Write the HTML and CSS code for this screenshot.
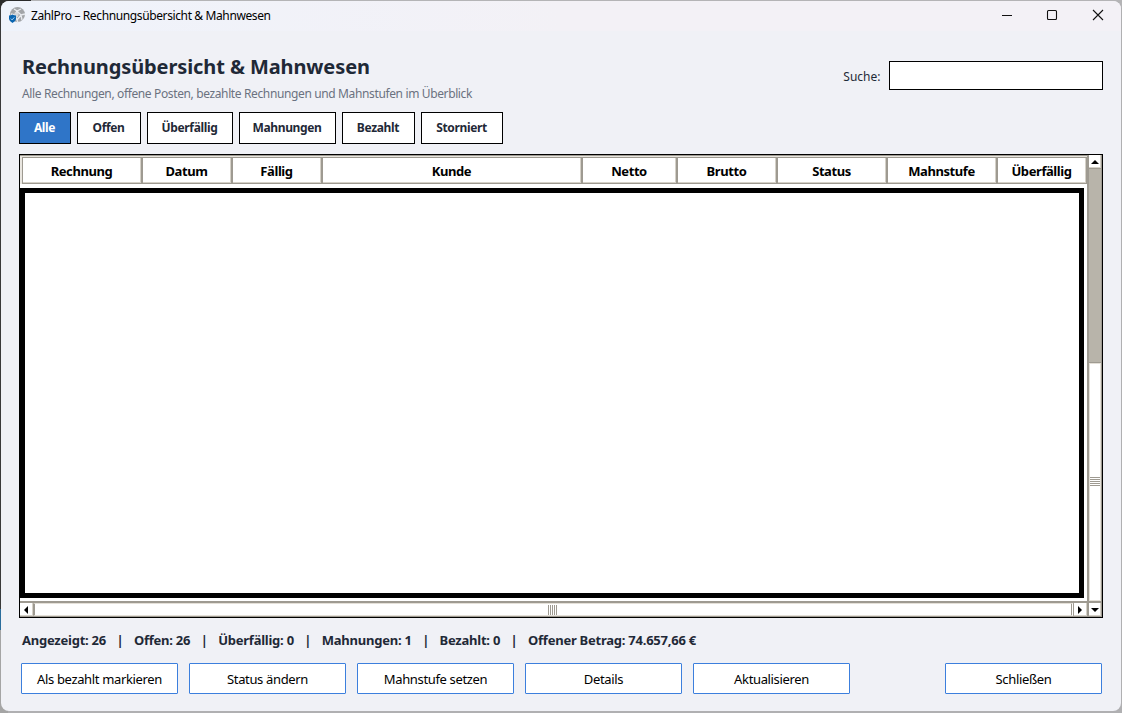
FILE: index.html
```
<!DOCTYPE html>
<html lang="de">
<head>
    <meta charset="UTF-8">
    <title>ZahlPro – Rechnungsübersicht &amp; Mahnwesen</title>
    <link rel="stylesheet" href="styles.css">
</head>
<body>
    <div class="window">
        <!-- Title Bar -->
        <header class="titlebar">
            <svg class="app-icon" width="18" height="18" viewBox="0 0 18 18">
                <circle cx="9.5" cy="7.500" r="7.500" fill="#a3a5a8"/>
                <path d="M6 2l3 2 4-2M3 7l4 1 2-4 4 4 4-1M7 8l2 5 4-5M9 13l1 3M13 8l1 5" fill="none" stroke="#e9ebef" stroke-width="1.3"/>
                <path d="M7 5l4 1-1 4-3 1-1-3z" fill="#d4d6d9"/>
                <path d="M1 8.500Q3 8.500 4.500 7.500Q6 8.500 8 8.500V12Q7.500 14.800 4.500 16Q1.500 14.800 1 12z" fill="#0b66b1"/>
                <path d="M2.800 11.600l1.300 1.300 2.200-2.500" fill="none" stroke="#b9dcfa" stroke-width="0.9"/>
            </svg>
            <span class="window-title">ZahlPro – Rechnungsübersicht &amp; Mahnwesen</span>
            <div class="window-controls">
                <svg width="12" height="12" viewBox="0 0 12 12"><path d="M2 6.500h10"/></svg>
                <svg width="12" height="12" viewBox="0 0 12 12"><rect x="1.500" y="1.500" width="9" height="9" rx="1"/></svg>
                <svg width="12" height="12" viewBox="0 0 12 12"><path d="M1 1l10 10M11 1L1 11"/></svg>
            </div>
        </header>

        <main class="content">
            <div class="page-header">
                <div>
                    <h1>Rechnungsübersicht &amp; Mahnwesen</h1>
                    <p class="subtitle">Alle Rechnungen, offene Posten, bezahlte Rechnungen und Mahnstufen im Überblick</p>
                </div>
                <div class="search">
                    <label for="suche">Suche:</label>
                    <input type="text" id="suche">
                </div>
            </div>

            <!-- Filter Buttons -->
            <div class="filters">
                <button class="filter alle active">Alle</button>
                <button class="filter offen">Offen</button>
                <button class="filter ueberfaellig">Überfällig</button>
                <button class="filter mahnungen">Mahnungen</button>
                <button class="filter bezahlt">Bezahlt</button>
                <button class="filter storniert">Storniert</button>
            </div>

            <!-- Invoice Table -->
            <div class="table-frame">
                <div class="table-view">
                    <div class="table-head">
                        <div class="col">Rechnung</div>
                        <div class="col">Datum</div>
                        <div class="col">Fällig</div>
                        <div class="col">Kunde</div>
                        <div class="col">Netto</div>
                        <div class="col">Brutto</div>
                        <div class="col">Status</div>
                        <div class="col">Mahnstufe</div>
                        <div class="col">Überfällig</div>
                    </div>
                    <div class="table-body"></div>
                </div>
                <div class="scroll-v">
                    <div class="arrow"><svg width="8" height="4" viewBox="0 0 8 4"><path d="M0 4L4 0L8 4z"/></svg></div>
                    <div class="trough"></div>
                    <div class="thumb"><div class="grip"></div></div>
                </div>
                <div class="scroll-h">
                    <div class="arrow"><svg width="4" height="8" viewBox="0 0 4 8"><path d="M4 0L0 4L4 8z"/></svg></div>
                    <div class="thumb"><div class="grip"></div></div>
                    <div class="arrow"><svg width="4" height="8" viewBox="0 0 4 8"><path d="M0 0L4 4L0 8z"/></svg></div>
                </div>
                <div class="arrow corner"><svg width="8" height="4" viewBox="0 0 8 4"><path d="M0 0L4 4L8 0z"/></svg></div>
            </div>

            <!-- Summary -->
            <div class="summary">
                <span>Angezeigt: 26</span>
                <span>|</span>
                <span>Offen: 26</span>
                <span>|</span>
                <span>Überfällig: 0</span>
                <span>|</span>
                <span>Mahnungen: 1</span>
                <span>|</span>
                <span>Bezahlt: 0</span>
                <span>|</span>
                <span>Offener Betrag: 74.657,66 €</span>
            </div>

            <div class="actions">
                <button class="action">Als bezahlt markieren</button>
                <button class="action">Status ändern</button>
                <button class="action">Mahnstufe setzen</button>
                <button class="action">Details</button>
                <button class="action">Aktualisieren</button>
                <button class="action close">Schließen</button>
            </div>
        </main>
    </div>
</body>
</html>
```
FILE: styles.css
```
/* General Styles */
* {
    box-sizing: border-box;
}

body {
    margin: 0;
    padding: 1px;
    height: 713px;
    overflow: hidden;
    font-family: "Noto Sans", "Open Sans", sans-serif;
    background:
        linear-gradient(to right, #2b2b2b 31px, #b4b4b6 31px) top / 100% 8px no-repeat,
        linear-gradient(#3a3a3a 609px, #2a6d9c 609px, #2a6d9c 630px, #a5a5a5 630px) left / 8px 100% no-repeat,
        #b0b0b2;
}

.window {
    width: 1120px;
    height: 710px;
    background: #f0f1f6;
    border-radius: 8px;
    overflow: hidden;
}

/* Title Bar */
.titlebar {
    display: flex;
    align-items: center;
    height: 30px;
    padding: 0 17px 0 7px;
    background: linear-gradient(to right, #eff3fb, #f3f1f6 50%);
}

.window-title {
    margin-left: 5px;
    padding-bottom: 1px;
    font-size: 12px;
    letter-spacing: -0.38px;
    color: #000;
    white-space: nowrap;
}

.window-controls {
    display: flex;
    gap: 34px;
    margin-left: auto;
    padding-bottom: 2px;
}

.window-controls svg {
    fill: none;
    stroke: #111;
    stroke-width: 1.1;
}

.content {
    padding: 22px 18px 0;
}

/* Page Header */
.page-header {
    display: flex;
    justify-content: space-between;
    height: 58px;
}

.page-header h1 {
    margin: 0 0 0 3px;
    font-size: 20px;
    line-height: 27px;
    color: #1f2937;
    letter-spacing: -0.1px;
}

.subtitle {
    margin: 5px 0 0 3px;
    font-size: 12px;
    line-height: 18px;
    color: #6b7280;
    letter-spacing: -0.37px;
}

.search {
    display: flex;
    align-items: center;
    height: 29px;
    margin-top: 8px;
    gap: 8.5px;
    font-size: 12px;
    color: #1f2937;
}

.search label {
    padding-top: 2px;
}

.search input {
    width: 214px;
    height: 29px;
    border: 1px solid #000;
    background: #fff;
}

/* Filters */
.filters {
    display: flex;
    gap: 6px;
    margin-top: 1px;
}

.filter {
    height: 32px;
    padding: 0 1px 1px 0;
    border: 1px solid #000;
    background: #fff;
    color: #1f2937;
    font: bold 12px "Noto Sans", sans-serif;
    letter-spacing: -0.35px;
}

.alle { width: 52px; }
.offen { width: 64px; }
.ueberfaellig { width: 86px; }
.mahnungen { width: 97px; }
.bezahlt { width: 73px; }
.storniert { width: 82px; }

.filter.active {
    background: #2f75c8;
    color: #fff;
}

/* Table */
.table-frame {
    display: grid;
    grid-template-columns: 1067px 15px;
    grid-template-rows: 446px 16px;
    width: 1084px;
    height: 464px;
    margin-top: 10px;
    border: 1px solid #000;
    background: #fff;
}

.table-view {
    display: flex;
    flex-direction: column;
    border-top: 1px solid #9e9a91;
}

.table-head {
    display: grid;
    grid-template-columns: 120px 90px 90px 260px 95px 100px 110px 110px 90px;
    height: 28px;
    padding-left: 2px;
    background: #e9e6e0;
}

.col {
    display: flex;
    align-items: center;
    justify-content: center;
    margin-top: 1px;
    padding-right: 1px;
    border: 1px solid #9e9a91;
    box-shadow: inset -1px -1px #d5d1c8;
    background: #fff;
    color: #000;
    font-size: 13px;
    font-weight: bold;
    letter-spacing: -0.42px;
}

.table-body {
    width: 1064px;
    height: 410px;
    margin-top: 4px;
    border: 5px solid #000;
    background: #fff;
}

/* Scrollbars */
.scroll-v {
    display: flex;
    flex-direction: column;
    border-left: 2px solid #9e9a91;
    border-right: 1px solid #9e9a91;
}

.arrow {
    display: flex;
    align-items: center;
    justify-content: center;
    width: 12px;
    height: 13px;
    padding-right: 1px;
    background: #fff;
    box-shadow: inset -1px -1px #d5d1c8;
}

.trough {
    height: 195px;
    border-top: 1px solid #9e9a91;
    border-bottom: 1px solid #9e9a91;
    background: #b8b4aa;
}

.thumb {
    display: flex;
    align-items: center;
    justify-content: center;
    flex: 1;
    border: 1px solid #e4e0d8;
    background: #fff;
}

.scroll-v .grip {
    width: 10px;
    height: 9px;
    margin-bottom: 2px;
    background: repeating-linear-gradient(#9e9a91 0 1px, #fff 1px 2px);
}

.scroll-h {
    display: flex;
    border-top: 2px solid #9e9a91;
    border-bottom: 1px solid #9e9a91;
}

.scroll-h .arrow {
    width: 13px;
}

.scroll-h .thumb {
    border-left: 2px solid #9e9a91;
    border-right: 3px double #9e9a91;
}

.scroll-h .grip {
    width: 9px;
    height: 10px;
    margin-right: 2px;
    background: repeating-linear-gradient(to right, #9e9a91 0 1px, #fff 1px 2px);
}

.arrow.corner {
    width: 15px;
    height: 16px;
    border: solid #9e9a91;
    border-width: 2px 1px 1px 2px;
}

/* Summary */
.summary {
    display: flex;
    gap: 10.5px;
    margin: 13px 0 0 3px;
    font-size: 13px;
    line-height: 18px;
    font-weight: bold;
    color: #1f2937;
    letter-spacing: -0.24px;
    white-space: nowrap;
}

/* Action Buttons */
.actions {
    display: flex;
    gap: 11px;
    margin: 14px 0 0 2px;
}

.action {
    width: 157px;
    height: 31px;
    padding: 0;
    border: 1px solid #3c7fdd;
    border-radius: 1px;
    background: #fff;
    color: #000;
    font: 13px "Noto Sans", sans-serif;
    letter-spacing: -0.35px;
}

.action.close {
    margin-left: auto;
    margin-right: 1px;
}
```
